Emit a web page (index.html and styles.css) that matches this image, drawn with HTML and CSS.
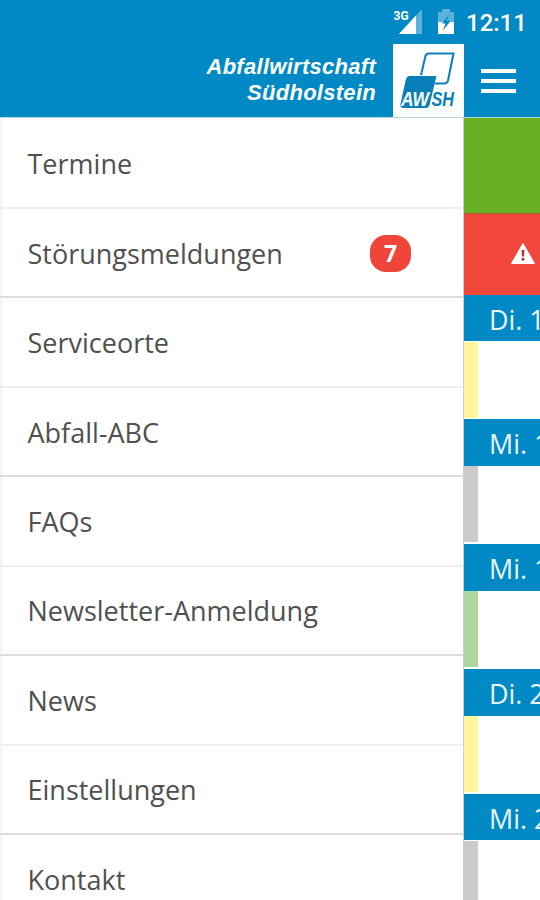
FILE: index.html
```
<!DOCTYPE html>
<html lang="de">
<head>
<meta charset="utf-8">
<title>Abfallwirtschaft Südholstein</title>
<link rel="stylesheet" href="styles.css">
</head>
<body>
<div class="app">
  <header class="top">
    <div class="status">
      <svg class="signal" viewBox="0 0 32 26" width="32" height="26">
        <path d="M29 0V25H6Z" fill="#5ab1db"/>
        <path d="M23 6.500V25H6Z" fill="#fff"/>
        <text x="0.500" y="10.500" class="net">3G</text>
      </svg>
      <svg class="battery" viewBox="0 0 16 26" width="16" height="26">
        <path d="M0 3H4V0H12V3H16V13H0Z" fill="#5ab1db"/>
        <path d="M0 13H16V25H0Z" fill="#fff"/>
        <path d="M11.500 5L4 14.500H7.500L5 21.500L12.500 12H8.500Z" fill="#0089c4"/>
      </svg>
      <span class="time">12:11</span>
    </div>
    <div class="brandbar">
      <div class="brand"><span class="line1">Abfallwirtschaft</span><span class="line2">Südholstein</span></div>
      <svg class="logo" viewBox="0 0 71 73" width="71" height="73">
        <rect width="71" height="73" fill="#fff"/>
        <path d="M28 31L32.500 12Q33.300 9.500 36 9.500H60.500L55 36.500Q54.300 39.500 51 39.500H42" fill="none" stroke="#087fb9" stroke-width="2"/>
        <path d="M16.500 32H43.500L36.500 61Q35.500 64 33 64H11Q6.500 64 7.500 60L12.500 37Q13.500 32 16.500 32Z" fill="#087fb9"/>
        <text x="8" y="62" class="aw" textLength="28" lengthAdjust="spacingAndGlyphs">AW</text>
        <text x="38.500" y="62" class="sh" textLength="22.500" lengthAdjust="spacingAndGlyphs">SH</text>
      </svg>
      <button class="menu" aria-label="Menü"><i></i><i></i><i></i></button>
    </div>
  </header>
  <div class="main">
    <nav class="drawer">
      <a class="item">Termine</a>
      <a class="item strong">Störungsmeldungen<span class="badge">7</span></a>
      <a class="item">Serviceorte</a>
      <a class="item strong">Abfall-ABC</a>
      <a class="item">FAQs</a>
      <a class="item strong">Newsletter-Anmeldung</a>
      <a class="item">News</a>
      <a class="item strong">Einstellungen</a>
      <a class="item">Kontakt</a>
    </nav>
    <section class="content">
      <div class="green"></div>
      <div class="alert">
        <svg viewBox="0 0 24 21" width="24" height="21">
          <path d="M12 0.500L23.500 20.500H0.500Z" fill="#fff" stroke="#fff" stroke-linejoin="round"/>
          <path d="M10.600 7H13.400L13 13.500H11Z" fill="#b92f28"/>
          <rect x="10.700" y="15" width="2.600" height="2.600" fill="#b92f28"/>
        </svg>
      </div>
      <div class="day"><div class="date">Di. 1</div><div class="bin yellow"></div></div>
      <div class="day"><div class="date">Mi. 1</div><div class="bin gray"></div></div>
      <div class="day"><div class="date">Mi. 1</div><div class="bin leaf"></div></div>
      <div class="day"><div class="date">Di. 2</div><div class="bin yellow"></div></div>
      <div class="day"><div class="date">Mi. 2</div><div class="bin gray"></div></div>
    </section>
  </div>
</div>
</body>
</html>
```
FILE: styles.css
```
* { box-sizing: border-box; }
body { margin: 0; background: #fff; font-family: "Open Sans", sans-serif; }
.app { width: 540px; height: 900px; overflow: hidden; display: flex; flex-direction: column; }
.top { height: 117px; flex: none; background: #0089c4; color: #fff; display: flex; flex-direction: column; }
.status { height: 44px; display: flex; justify-content: flex-end; align-items: center; padding-right: 15px; }
.signal { margin: 0 13px 0 0; }
.battery { margin-right: 12px; }
.net { font: bold 12px Roboto, sans-serif; fill: #fff; }
.time { font: 500 24px/46px Roboto, sans-serif; width: 59px; padding-top: 1px; white-space: nowrap; }
.brandbar { height: 73px; display: flex; justify-content: flex-end; }
.brand { display: flex; flex-direction: column; align-items: flex-end; margin-right: 17px; padding-top: 10px; font: italic bold 22px/26px "Liberation Sans", sans-serif; letter-spacing: 0.280px; }
.aw { font: italic bold 20px "Liberation Sans", sans-serif; fill: #fff; }
.sh { font: italic bold 20px "Liberation Sans", sans-serif; fill: #087fb9; }
.menu { width: 76px; padding: 1px 24px 0 17px; border: 0; background: none; display: flex; flex-direction: column; justify-content: center; gap: 6px; }
.menu i { display: block; height: 4px; width: 35px; background: #fff; }
.main { flex: 1; display: flex; min-height: 0; border-top: 1px solid #b9d4df; }
.drawer { width: 464px; flex: none; background: linear-gradient(90deg, #f2f2f2, #fff 4px); border-right: 1px solid #cfcfcf; }
.item { height: 89.450px; display: flex; align-items: center; justify-content: space-between; padding: 2px 52px 0 27.500px; border-bottom: 2px solid #efefef; font-size: 27px; line-height: 36px; color: #505050; white-space: nowrap; }
.item:first-child { height: 91px; }
.item.strong { border-bottom-color: #dedede; }
.badge { width: 41px; height: 37px; border-radius: 16px; background: #ef453a; color: #fff; font-weight: 700; font-size: 23px; line-height: 36px; text-align: center; }
.content { flex: 1; min-width: 0; overflow: hidden; }
.green { height: 96px; background: #69b023; border-bottom: 1px solid #a36a2c; }
.alert { height: 80.700px; background: #f0463b; padding: 29px 0 0 47px; }
.alert svg { display: block; }
.day { height: 124.800px; }
.date { height: 46.500px; background: #0089c4; color: #e8f7ff; font-size: 26.900px; line-height: 49px; padding-left: 25px; white-space: nowrap; overflow: hidden; }
.bin { width: 14px; height: 76px; margin-top: 0.500px; }
.yellow { background: #fff799; }
.gray { background: #cbcbcb; }
.leaf { background: #aed79d; }
```
